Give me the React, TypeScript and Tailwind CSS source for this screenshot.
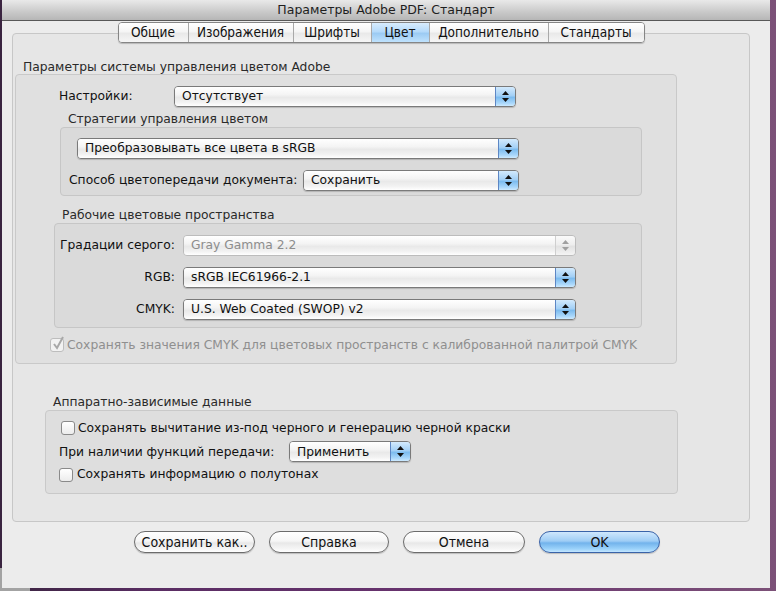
import React from "react";

const BODY_FONT = "font-['DejaVu_Sans',sans-serif]";
const NARROW_FONT = "font-['Liberation_Sans_Narrow','DejaVu_Sans_Condensed','Liberation_Sans',sans-serif]";
const T = "text-[12.3px] whitespace-nowrap";

function Arrows({ disabled }: { disabled?: boolean }) {
  const c = disabled ? "#a0a0a0" : "#111";
  return (
    <div className="flex flex-col items-center gap-[3px]">
      <svg width="7" height="4" viewBox="0 0 7 4">
        <path d="M3.5 0 L7 4 L0 4Z" fill={c} />
      </svg>
      <svg width="7" height="4" viewBox="0 0 7 4">
        <path d="M0 0 L7 0 L3.5 4Z" fill={c} />
      </svg>
    </div>
  );
}

function Popup({ text, className, disabled }: { text: string; className: string; disabled?: boolean }) {
  return (
    <div
      className={`${className} flex h-[21px] shrink-0 overflow-hidden rounded-[4px] border ${
        disabled ? "border-[#bcbcbc]" : "border-[#7a7a7a] shadow-[0_1px_1px_rgba(0,0,0,0.18)]"
      }`}
    >
      <div
        className={`flex flex-1 items-center pl-[7px] ${T} leading-none bg-[linear-gradient(to_bottom,#ffffff_0%,#f4f4f4_40%,#e9e9e9_55%,#f2f2f2_80%,#ffffff_100%)] ${
          disabled ? "text-[#8d8d8d]" : "text-[#111]"
        }`}
      >
        {text}
      </div>
      <div
        className={`flex w-[20px] items-center justify-center border-l ${
          disabled
            ? "border-[#cfcfcf] bg-[linear-gradient(to_bottom,#fafafa_0%,#eeeeee_45%,#e2e2e2_55%,#f4f4f4_100%)]"
            : "border-[#5d86c4] bg-[linear-gradient(to_bottom,#d3eafd_0%,#a3d0f6_45%,#7dbcef_55%,#a9d7fb_85%,#cdeaff_100%)]"
        }`}
      >
        <Arrows disabled={disabled} />
      </div>
    </div>
  );
}

function Checkbox({ checked, disabled }: { checked?: boolean; disabled?: boolean }) {
  return (
    <div
      className={`relative h-[14px] w-[14px] shrink-0 rounded-[3px] border ${
        disabled ? "border-[#bdbdbd] bg-[#f2f2f2]" : "border-[#8a8a8a] bg-[linear-gradient(to_bottom,#ffffff,#ececec)]"
      }`}
    >
      {checked && (
        <svg className="absolute left-[1px] top-[-3px]" width="13" height="15" viewBox="0 0 13 15">
          <path d="M2 8 L5 12 L11 1" stroke={disabled ? "#a8a8a8" : "#222"} strokeWidth="2" fill="none" />
        </svg>
      )}
    </div>
  );
}

function PushButton({ label, className, primary }: { label: string; className: string; primary?: boolean }) {
  return (
    <div
      className={`${className} flex h-[22px] items-center justify-center whitespace-nowrap rounded-full border text-[14px] ${NARROW_FONT} ${
        primary
          ? "border-[#3a63a8] bg-[linear-gradient(to_bottom,#cfe7fd_0%,#9fcdf5_45%,#72b3ec_55%,#9cd3fb_85%,#c4e6ff_100%)]"
          : "border-[#6c6c6c] bg-[linear-gradient(to_bottom,#ffffff_0%,#f6f6f6_45%,#e8e8e8_55%,#f6f6f6_85%,#ffffff_100%)]"
      } text-[#111] shadow-[0_1px_1px_rgba(0,0,0,0.2)]`}
    >
      {label}
    </div>
  );
}

const tabs: { label: string; cls: string; active?: boolean }[] = [
  { label: "Общие", cls: "w-[69px]" },
  { label: "Изображения", cls: "w-[105px]" },
  { label: "Шрифты", cls: "w-[78px]" },
  { label: "Цвет", cls: "w-[58px]", active: true },
  { label: "Дополнительно", cls: "w-[119px]" },
  { label: "Стандарты", cls: "w-[96px]" },
];

export default function App() {
  return (
    <div
      className={`relative flex h-[591px] w-[776px] overflow-hidden bg-[linear-gradient(to_right,#3a2440_0%,#5a2d63_20%,#6a3470_60%,#7c5178_100%)] pl-[2px] ${BODY_FONT}`}
    >
      <div className="absolute bottom-0 left-0 h-[23px] w-[30px] bg-[#a3a3a3]" />
      <div className="relative z-10 flex h-[588px] w-[768px] flex-col bg-[#ececec]">
        {/* title bar */}
        <div className="flex h-[21px] shrink-0 items-center justify-center border-b border-[#585858] bg-[linear-gradient(to_bottom,#e9e9e9,#c9c9c9_60%,#b6b6b6)] text-[12.5px] text-[#1e1e1e]">
          Параметры Adobe PDF: Стандарт
        </div>

        {/* tabs */}
        <div className="relative z-10 mt-[1px] flex justify-center pr-[10px]">
          <div className="flex h-[21px] overflow-hidden rounded-[4px] border border-[#858585] shadow-[0_1px_1px_rgba(0,0,0,0.2)]">
            {tabs.map((t, i) => (
              <div
                key={t.label}
                className={`${t.cls} flex items-center justify-center text-[13.5px] text-[#111] ${NARROW_FONT} ${
                  i > 0 ? "border-l border-[#a9a9a9]" : ""
                } ${
                  t.active
                    ? "bg-[linear-gradient(to_bottom,#d8ecfd_0%,#b5dafa_45%,#9ccbf3_55%,#bfe2fd_100%)]"
                    : "bg-[linear-gradient(to_bottom,#ffffff_0%,#f5f5f5_45%,#e9e9e9_55%,#f6f6f6_100%)]"
                }`}
              >
                {t.label}
              </div>
            ))}
          </div>
        </div>

        {/* tab panel */}
        <div className="ml-[10px] mt-[-10px] flex h-[489px] w-[738px] flex-col rounded-[4px] border border-[#c7c7c7] bg-[#e6e6e6] pt-[25px]">
          <div className={`ml-[10px] h-[16px] ${T} leading-[16px] text-[#2a2a2a]`}>
            Параметры системы управления цветом Adobe
          </div>
          {/* group 1 */}
          <div className="ml-[2px] mt-[-1px] flex h-[290px] w-[662px] flex-col rounded-[4px] border border-[#c9c9c9] bg-[#e0e0e0]">
            <div className="mt-[11px] flex items-center pl-[43px]">
              <div className={`w-[115px] ${T} text-[#111]`}>Настройки:</div>
              <Popup text="Отсутствует" className="w-[342px]" />
            </div>

            <div className={`ml-[52px] mt-[4px] h-[16px] ${T} leading-[16px] text-[#2a2a2a]`}>
              Стратегии управления цветом
            </div>
            <div className="ml-[44px] flex h-[69px] w-[582px] flex-col rounded-[4px] border border-[#c6c6c6] bg-[#dadada] pt-[10px]">
              <div className="pl-[16px]">
                <Popup text="Преобразовывать все цвета в sRGB" className="w-[442px]" />
              </div>
              <div className="mt-[11px] flex items-center pl-[8px]">
                <div className={`w-[234px] ${T} text-[#111]`}>Способ цветопередачи документа:</div>
                <Popup text="Сохранить" className="w-[216px]" />
              </div>
            </div>

            <div className={`ml-[46px] mt-[11px] h-[16px] ${T} leading-[16px] text-[#2a2a2a]`}>
              Рабочие цветовые пространства
            </div>
            <div className="ml-[38px] flex h-[105px] w-[588px] flex-col gap-[11px] rounded-[4px] border border-[#c6c6c6] bg-[#dadada] pt-[11px]">
              <div className="flex items-center">
                <div className={`w-[121px] pr-[1px] text-right ${T} text-[#111]`}>Градации серого:</div>
                <div className="w-[7px]" />
                <Popup text="Gray Gamma 2.2" className="w-[393px]" disabled />
              </div>
              <div className="flex items-center">
                <div className={`w-[121px] pr-[1px] text-right ${T} text-[#111]`}>RGB:</div>
                <div className="w-[7px]" />
                <Popup text="sRGB IEC61966-2.1" className="w-[393px]" />
              </div>
              <div className="flex items-center">
                <div className={`w-[121px] pr-[1px] text-right ${T} text-[#111]`}>CMYK:</div>
                <div className="w-[7px]" />
                <Popup text="U.S. Web Coated (SWOP) v2" className="w-[393px]" />
              </div>
            </div>

            <div className="ml-[34px] mt-[8px] flex items-center gap-[3px]">
              <Checkbox checked disabled />
              <div className={`${T} text-[#8f8f8f]`}>
                Сохранять значения CMYK для цветовых пространств с калиброванной палитрой CMYK
              </div>
            </div>
          </div>

          <div className={`ml-[40px] mt-[30px] h-[16px] ${T} leading-[16px] text-[#2a2a2a]`}>
            Аппаратно-зависимые данные
          </div>
          <div className="ml-[32px] flex h-[84px] w-[633px] flex-col rounded-[4px] border border-[#c9c9c9] bg-[#dedede] pt-[8px]">
            <div className="flex items-center gap-[3px] pl-[15px]">
              <Checkbox />
              <div className={`${T} text-[#111]`}>Сохранять вычитание из-под черного и генерацию черной краски</div>
            </div>
            <div className="mt-[4px] flex items-center pl-[13px]">
              <div className={`w-[230px] ${T} text-[#111]`}>При наличии функций передачи:</div>
              <Popup text="Применить" className="w-[122px]" />
            </div>
            <div className="mt-[3px] flex items-center gap-[4px] pl-[13px]">
              <Checkbox />
              <div className={`${T} text-[#111]`}>Сохранять информацию о полутонах</div>
            </div>
          </div>
        </div>

        {/* buttons */}
        <div className="ml-[132px] mt-[9px] flex gap-[14px]">
          <PushButton label="Сохранить как.." className="w-[121px]" />
          <PushButton label="Справка" className="w-[120px]" />
          <PushButton label="Отмена" className="w-[122px]" />
          <PushButton label="OK" className="w-[121px]" primary />
        </div>
      </div>
    </div>
  );
}
